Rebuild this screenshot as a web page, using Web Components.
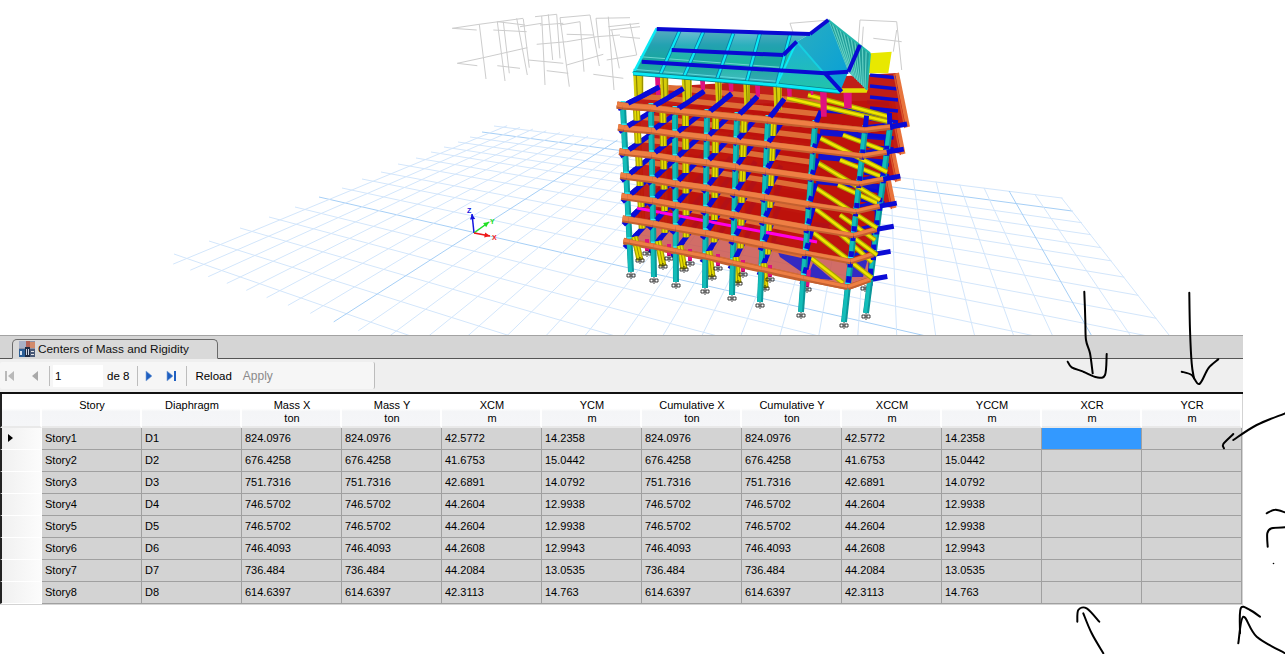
<!DOCTYPE html>
<html><head><meta charset="utf-8">
<style>
html,body{margin:0;padding:0;background:#fff}
body{width:1285px;height:654px;overflow:hidden;position:relative;font-family:"Liberation Sans",Arial,sans-serif}
</style></head>
<body>
<app-shell>
  <model-view></model-view>
  <results-panel>
    <tab-strip label="Centers of Mass and Rigidity"></tab-strip>
    <grid-toolbar></grid-toolbar>
    <data-grid></data-grid>
  </results-panel>
</app-shell>
<ink-layer></ink-layer>
<script>
class AppShell extends HTMLElement{constructor(){super();this.attachShadow({mode:'open'}).innerHTML=`<style>:host{display:flex;flex-direction:column;width:1285px;height:654px}</style><slot></slot>`}}
class ResultsPanel extends HTMLElement{constructor(){super();this.attachShadow({mode:'open'}).innerHTML=`<style>:host{display:flex;flex-direction:column;width:1243px;background:#d3d3d3;color:#000}</style><slot></slot>`}}

class TabStrip extends HTMLElement{constructor(){super();const l=this.getAttribute('label');this.attachShadow({mode:'open'}).innerHTML=`<style>
:host{display:flex;align-items:flex-end;height:24px;box-sizing:border-box;padding-left:12px;background:#d5d5d5;border-top:1px solid #a3a3a3;border-bottom:1px solid #555}
.tab{display:flex;align-items:center;gap:3px;box-sizing:border-box;width:206px;height:20px;margin-bottom:-1px;padding:0 0 0 6px;background:#d9d9d9;border:1px solid #6a6a6a;border-bottom:1px solid #d9d9d9;border-radius:5px 5px 0 0;font:11.8px "Liberation Sans",Arial,sans-serif;color:#111}
svg{flex:none;display:block}
</style><div class="tab"><svg width="16" height="16" viewBox="0 0 16 16"><rect width="16" height="16" fill="#8d93a6"/><rect x="0" y="0" width="7" height="7" fill="#a9b2c8"/><rect x="7" y="0" width="4" height="6" fill="#b5655a"/><rect x="11" y="1" width="5" height="6" fill="#d28b6b"/><rect x="0" y="8" width="6" height="8" fill="#2c5f96"/><rect x="1" y="10" width="2" height="4" fill="#d9e4f2"/><rect x="6" y="6" width="5" height="10" fill="#1f2c44"/><rect x="7" y="8" width="1" height="6" fill="#cfd6e4"/><rect x="9" y="8" width="1" height="6" fill="#cfd6e4"/><rect x="11" y="8" width="5" height="8" fill="#4a5a78"/><rect x="12" y="10" width="3" height="1" fill="#e6e6e6"/><rect x="12" y="13" width="3" height="1" fill="#e6e6e6"/></svg><span>${l}</span></div>`}}

class GridToolbar extends HTMLElement{constructor(){super();
const ic=(d,c)=>`<svg width="12" height="12" viewBox="0 0 12 12">${d.replace(/FILL/g,c)}</svg>`;
const first=`<rect x="1" y="1" width="2" height="10" fill="FILL"/><path d="M10 1v10L4 6z" fill="FILL"/>`;
const prev=`<path d="M9 1v10L3 6z" fill="FILL"/>`;
const next=`<path d="M3 1v10l6-5z" fill="FILL" stroke="#7fa6d8" stroke-width=".6"/>`;
const last=`<path d="M1 1v10l6-5z" fill="FILL" stroke="#7fa6d8" stroke-width=".6"/><rect x="8" y="1" width="2" height="10" fill="FILL"/>`;
this.attachShadow({mode:'open'}).innerHTML=`<style>
:host{display:block;height:35px;box-sizing:border-box;background:#efefef;border-bottom:2px solid #111;padding:3px 0 3px 0;font:11.5px "Liberation Sans",Arial,sans-serif}
.bar{display:flex;align-items:center;width:375px;height:27px;box-sizing:border-box;background:#f6f6f6;border-right:1px solid #bcbcbc;border-radius:2px;padding-left:4px}
svg{display:block;flex:none}
.sep{width:1px;height:20px;background:#bdbdbd;flex:none}
input{box-sizing:border-box;width:50px;height:22px;border:0;background:#fff;font:11.5px "Liberation Sans",Arial,sans-serif;padding:0 0 0 2px;margin:0;color:#000;outline:0}
.off{color:#8a8a8a;font-size:12px}
</style><div class="bar">
<span style="width:12px">${ic(first,'#b9b9b9')}</span><span style="width:13px"></span><span style="width:12px">${ic(prev,'#a9a9a9')}</span><span style="width:8px"></span>
<span class="sep"></span><span style="width:3px"></span><input value="1" aria-label="page"><span style="width:4px"></span><span>de 8</span><span style="width:8px"></span><span class="sep"></span><span style="width:5px"></span>
<span style="width:12px">${ic(next,'#1f5fc0')}</span><span style="width:11px"></span><span style="width:12px">${ic(last,'#1f5fc0')}</span><span style="width:8px"></span><span class="sep"></span><span style="width:8px"></span>
<span>Reload</span><span style="width:11px"></span><span class="off">Apply</span>
</div>`}}

class DataGrid extends HTMLElement{constructor(){super();
const heads=[['Story'],['Diaphragm'],['Mass X','ton'],['Mass Y','ton'],['XCM','m'],['YCM','m'],['Cumulative X','ton'],['Cumulative Y','ton'],['XCCM','m'],['YCCM','m'],['XCR','m'],['YCR','m']];
const d=[[824.0976,42.5772,14.2358],[676.4258,41.6753,15.0442],[751.7316,42.6891,14.0792],[746.5702,44.2604,12.9938],[746.5702,44.2604,12.9938],[746.4093,44.2608,12.9943],[736.484,44.2084,13.0535],[614.6397,42.3113,14.763]];
let h=`<div class="corner"></div>`+heads.map(x=>`<div class="h"><span>${x[0]}</span>${x[1]?`<span>${x[1]}</span>`:''}</div>`).join('');
d.forEach((r,i)=>{const cells=[`Story${i+1}`,`D${i+1}`,r[0],r[0],r[1],r[2],r[0],r[0],r[1],r[2],'',''];
h+=`<div class="rh">${i==0?'<i></i>':''}</div>`+cells.map((c,j)=>`<div class="c${i==0&&j==10?' sel':''}">${c}</div>`).join('')});
this.attachShadow({mode:'open'}).innerHTML=`<style>
:host{display:block;height:211px;background:#d3d3d3;font:11px "Liberation Sans",Arial,sans-serif;color:#000}
.g{display:grid;grid-template-columns:42px repeat(12,100px);grid-template-rows:34px repeat(8,22px);width:1242px}
.corner,.h{box-sizing:border-box;background:linear-gradient(#fff 0,#fff 45%,#f4f5f7 55%,#f5f6f8 100%);border-right:2px solid #fff;border-bottom:2px solid #e9e9e9}
.corner{border-left:2px solid #222}
.h{display:flex;flex-direction:column;align-items:center;padding:5px 0 0 2px;line-height:13px}
.rh{box-sizing:border-box;position:relative;border-left:2px solid #222;background:linear-gradient(90deg,#f0f0f0,#fcfcfc);border-bottom:1px solid #fff;border-right:1px solid #fff}
.rh i{position:absolute;left:6px;top:6px;width:0;height:0;border-left:5px solid #000;border-top:4px solid transparent;border-bottom:4px solid transparent}
.c{box-sizing:border-box;padding:0 0 0 3px;line-height:21px;background:#d3d3d3;border-right:1px solid #a0a0a0;border-bottom:1px solid #a0a0a0;white-space:nowrap;overflow:hidden}
.sel{background:#3399ff}
</style><div class="g">${h}</div>`}}

class ModelView extends HTMLElement{constructor(){super();
let s='';
const L=(a,b,c,d,col,w,op)=>{s+=`<line x1="${a.toFixed(1)}" y1="${b.toFixed(1)}" x2="${c.toFixed(1)}" y2="${d.toFixed(1)}" stroke="${col}" stroke-width="${w}"${op?` opacity="${op}"`:''}/>`};
const P=(pts,f,op)=>{s+=`<polygon points="${pts.map(p=>p[0].toFixed(1)+','+p[1].toFixed(1)).join(' ')}" fill="${f}"${op?` opacity="${op}"`:''}/>`};
const VA=[-594,-12],VB=[883,-30];
const aL=[[494,126],[482,132],[470,137],[458,142],[444,147],[431,152],[416,158],[398,164],[381,172],[362,179],[342,188],[319,197],[295,207],[269,217],[240,228],[209,241],[174,254]];
aL.forEach((p,i)=>{const m=(p[1]-VA[1])/(p[0]-VA[0]);
  const x=(p[1]-m*p[0]-214+1.283*1075)/(1.283-m);const y=p[1]+m*(x-p[0]);
  L(p[0],p[1],x,y,(i==1||i==11)?'#a6cff6':'#d3e6fb',1)});
for(let k=0;k<=30;k++){const x0=2+38.9*k;const sl=(x0-VB[0])/(335-VB[1]);
  const y=(126+.13*(VB[0]-sl*VB[1]-509))/(1-.13*sl);const x=VB[0]+sl*(y-VB[1]);
  const y2=(264+.36*(VB[0]-sl*VB[1]-173))/(1-.36*sl);const x2=VB[0]+sl*(y2-VB[1]);
  L(x,y,x2,y2,(k==8||k==28)?'#a6cff6':'#d3e6fb',1)}
const ar=(x1,y1,x2,y2,c)=>{L(x1,y1,x2,y2,c,1.5);const a=Math.atan2(y2-y1,x2-x1);const q=(t,r)=>[x2+r*Math.cos(a+t),y2+r*Math.sin(a+t)];P([[x2,y2],q(Math.PI-.45,6),q(Math.PI+.45,6)],c)};
ar(474,233,472,214,'#1414e0');ar(474,233,489,222,'#22e022');ar(474,233,490,236,'#f01818');
s+=`<g font-family="Liberation Sans,Arial,sans-serif" font-size="7" font-weight="700"><text x="467" y="213" fill="#1414e0">Z</text><text x="490" y="224" fill="#22e022">Y</text><text x="492" y="240" fill="#f01818">X</text></g>`;
const z6=[[118,58,138,222],[172,50,195,228],[190,50,208,205],[230,40,262,210],[250,42,268,188],[305,33,315,240],[325,28,338,165],[350,28,360,160],[360,38,388,245],[420,50,432,200],[450,30,478,183],[468,40,478,130],[505,35,522,255],[515,75,538,190],[570,55,590,150],
[37,70,118,58],[118,58,250,40],[37,70,110,75],[172,50,255,60],[160,75,260,80],[52,175,130,158],[130,158,262,128],[52,175,112,182],[172,182,240,190],[240,65,305,55],[285,35,350,28],[300,60,370,55],[360,38,450,30],[360,60,420,50],[290,118,380,110],[380,110,470,95],[265,165,370,175],[380,180,490,148],[320,197,385,205],[468,40,570,38],[505,65,598,55],[380,88,460,90],[540,95,600,100],[470,95,540,90],[460,208,550,220],[500,165,590,150],[510,75,600,65]];
z6.forEach(a=>L(440+a[0]/3,5+a[1]/3,440+a[2]/3,5+a[3]/3,'#cdcdcd',1));
const Zx=(x,y)=>[580+x/3,10+y/3];
const z3g=[[630,40,750,30],[630,40,640,70],[840,30,950,35],[840,30,835,100],[950,35,965,180],[965,95,880,85],[950,60,940,125],[850,50,845,120]];
z3g.forEach(a=>{const p=Zx(a[0],a[1]),q=Zx(a[2],a[3]);L(p[0],p[1],q[0],q[1],'#cdcdcd',1)});
const T=[[623,106],[651,108],[675,111],[707,114],[737,117],[768,120],[815,125],[865,130],[890,127]];
const F=[[631,272],[654,277],[676,282],[705,288],[732,295],[760,302],[801,312],[844,322],[866,313]];
const lev=[0,.135,.28,.425,.55,.685,.82];
const node=(i,k)=>[T[i][0]+(F[i][0]-T[i][0])*lev[k],T[i][1]+(F[i][1]-T[i][1])*lev[k]];
const dep=(p,f)=>[p[0]+(VB[0]-p[0])*f,p[1]+(VB[1]-p[1])*f];
const LP=(p,q,c,w,o)=>L(p[0],p[1],q[0],q[1],c,w,o);
const ye=[[[787,98,890,122],[808,95,890,117]],[[820,138,887,172],[843,135,883,150]],[[818,163,880,200],[840,160,880,176]],[[816,188,877,228],[838,185,877,203]],[[813,207,877,255],[840,215,875,240]],[[810,230,872,278],[830,225,872,262]],[[810,257,843,283]]];
const pin=(x,y)=>{s+=`<path d="M${x-4} ${y-1}h3v3h-3zM${x+1} ${y-1}h3v3h-3zM${x} ${y-3}v7" fill="none" stroke="#111" stroke-width=".8"/>`};
const col=(a,b)=>{LP(a,b,'#0a9699',6);L(a[0]-.8,a[1],b[0]-.8,b[1],'#12bdb9',3.6);};
const wall=(a,b)=>{LP(a,b,'#a8a000',7);LP(a,b,'#e6dc00',4.5);LP(a,b,'#9a9400',1)};
const beam=(p,q,w)=>{LP(p,q,'#c4602f',w);LP([p[0],p[1]-.8],[q[0],q[1]-.8],'#ee7f44',w-2.4)};
for(let k=6;k>=0;k--){
  const fr=[];for(let i=0;i<=8;i++)fr.push(node(i,k));
  const n0=node(0,k),n8=node(8,k);
  const back=k<=3?[[908-4.5*k,127+27*k],[897-4.5*k,73+27*k]]:[dep(n8,.2)];
  P([...fr,...back,dep(n0,.14)],k==6?'#c9534c':'#bd120c',k==6?.85:.95);
  if(k==6){[[[773,240],[807,253],[803,273],[780,257]],[[813,263],[833,280],[807,278]],[[843,250],[868,258],[863,277],[850,277]]].forEach(b=>P(b,'#2222cc',.9))}
  [.14,.07].forEach(f=>{for(let i=0;i<6;i++)LP(dep(fr[i],f),dep(fr[i+1],f),'#dd6c36',5.5);});
  if(k<6){LP(dep(fr[6],.1),dep(fr[8],.08),'#1212d0',6);LP(dep(fr[7],.02),dep(fr[8],.02),'#1212d0',3)}
  if(k<=3){for(let j=0;j<5;j++){const y=75+j*11+27*k,x=870-k*3;L(x,y,x+28-(k*1.5),y+3,'#0b0bd6',3.5)}
    L(908-4.5*k,127+27*k,897-4.5*k,73+27*k,'#e8743c',4);L(905-4.5*k,128+27*k,894-4.5*k,74+27*k,'#d8572a',1.5)}
  (ye[k]||[]).forEach(a=>{L(a[0],a[1],a[2],a[3],'#aba300',5);L(a[0],a[1],a[2],a[3],'#f0e600',2.6)});
  for(let i=0;i<=8;i++){const p=fr[i];LP(dep(p,-.02),dep(p,i>=6?.09:.14),'#0b0bd6',5)}
  if(k==5)L(637,208,817,242,'#ff00e6',3);
  if(k>0){
    for(let i=0;i<6;i++)wall(dep(node(i,k-1),.05),dep(node(i,k),.05));
    for(let i=0;i<=8;i++)col(node(i,k-1),node(i,k));
  }
  let prev=[n0[0]-6,n0[1]-1];for(let i=0;i<=8;i++){beam(prev,fr[i],i>=7?5.5:7);prev=fr[i]}
  LP(n8,[n8[0]+17,n8[1]-3],'#0b0bd6',5);
  for(let i=0;i<=8;i++){const p=fr[i];LP([p[0],p[1]-5],[p[0],p[1]-3.5],'#2ee9f2',5);LP(dep(p,.015),dep(p,.035),'#0b0bd6',5)}
  if(k==6){
    const inner=[[640,260],[647,253],[663,266],[669,258],[684,269],[690,263],[712,277],[718,268],[738,283],[743,274],[765,288],[770,279]];
    for(let i=0;i<6;i++){const a=dep(node(i,6),.02);const b=inner[i*2];wall(a,b);const c=inner[i*2+1];L(c[0],c[1]-14,c[0],c[1]-2,'#e0117f',4)}
    L(809,270,807,287,'#e0117f',4);
    inner.forEach(p=>pin(p[0],p[1]));pin(807,289);pin(865,288);
    for(let i=0;i<=8;i++){const a=node(i,6),b=F[i];col(a,b);pin(b[0],b[1]+3)}
    let pv=[n0[0]-6,n0[1]-1];for(let i=0;i<=8;i++){beam(pv,fr[i],5.5);pv=fr[i]}
  }
}
const Z=a=>a.map(p=>Zx(p[0],p[1]));
[[225,200,240,255],[360,210,375,240],[445,215,460,245],[525,225,540,260],[620,230,635,260],[690,235,700,255],[720,240,740,320],[790,240,815,295]].forEach(a=>{const p=Zx(a[0],a[1]),q=Zx(a[2],a[3]);P([p,[q[0],p[1]],q,[p[0]+1,q[1]]],'#e0117f')});
[[160,195,190,260],[240,200,265,268],[305,205,335,275],[405,215,425,285],[490,220,510,290],[580,230,605,300]].forEach(a=>{const p=Zx(a[0],a[1]),q=Zx(a[2],a[3]);P([p,[q[0],p[1]],q,[p[0]+1,q[1]]],'#d6cd0a');L(p[0]+3,p[1],p[0]+4,q[1],'#8b8500',1.2);L(q[0]-1,p[1],q[0]-1,q[1],'#8b8500',1)});
{let prev=[617,105];for(let i=0;i<=8;i++){const n=node(i,0);beam(prev,n,i>=7?5.5:7);prev=n}
 for(let i=0;i<6;i++){const n=node(i,0);LP(dep(n,.02),dep(n,.14),'#0b0bd6',5);}
}
P(Z([[870,130],[935,125],[925,190],[860,190]]),'#e8e800');
P(Z([[770,235],[865,235],[860,248],[780,248]]),'#e2dc00');
s+=`<defs><linearGradient id="g1" x1="0" y1="0" x2="0" y2="1"><stop offset="0" stop-color="#78bdd6"/><stop offset=".3" stop-color="#2bb0bc"/><stop offset=".6" stop-color="#1cb8a0"/><stop offset="1" stop-color="#4ab9c6"/></linearGradient><linearGradient id="g2" x1="0" y1="0" x2="1" y2="1"><stop offset="0" stop-color="#2aaec0"/><stop offset="1" stop-color="#069fd8"/></linearGradient><linearGradient id="g3" x1="0" y1="0" x2="0" y2="1"><stop offset="0" stop-color="#1db1d8"/><stop offset="1" stop-color="#22c4a8"/></linearGradient></defs>`;
P(Z([[745,30],[870,130],[860,240],[805,185]]),'#1f9d98');
for(let j=0;j<11;j++){const f=j/11;const a=Zx(745+125*f,30+100*f),b=Zx(805+55*f,185+55*f);LP(a,b,'#63d0c4',1.2)}
P(Z([[230,55],[690,72],[650,95],[590,225],[160,190]]),'url(#g1)');
P(Z([[690,72],[745,30],[805,185],[780,245],[650,95]]),'url(#g2)');
P(Z([[650,95],[780,245],[590,225]]),'url(#g3)');
const ZL=(x1,y1,x2,y2,c,w)=>{const p=Zx(x1,y1),q=Zx(x2,y2);LP(p,q,c,w)};
[[230,55,300,60,240,195,160,190],[370,65,460,70,410,210,310,205],[540,70,630,75,590,225,500,215]].forEach(a=>P(Z([[a[0],a[1]],[a[2],a[3]],[a[4],a[5]],[a[6],a[7]]]),'#0e7f92',.28));
ZL(160,178,590,214,'#5fd8dc',1);ZL(180,140,600,172,'#6ad6d0',1);
[[300,60,240,195],[370,65,310,205],[460,70,410,210],[540,70,500,215],[630,75,590,225]].forEach(a=>{ZL(a[0],a[1],a[2],a[3],'#0a7fa8',4);ZL(a[0],a[1],a[2],a[3],'#0beaf5',2.2)});
ZL(230,55,160,190,'#0beaf5',2.5);
ZL(160,190,590,225,'#08808f',4.5);ZL(590,225,780,245,'#08808f',4.5);
ZL(160,190,590,225,'#0beaf5',2.8);ZL(590,225,780,245,'#0beaf5',2.8);
ZL(650,95,590,225,'#0beaf5',2);ZL(650,95,780,245,'#16cfe0',2);
ZL(745,30,870,130,'#23b8ad',2);ZL(870,130,860,240,'#23b8ad',2);
ZL(230,57,690,72,'#0909d2',4);ZL(690,72,745,30,'#0909d2',4);
ZL(275,120,610,135,'#0909d2',4);ZL(610,135,650,95,'#0909d2',4);
ZL(185,155,735,190,'#0909d2',4);ZL(735,190,805,185,'#0909d2',4);
ZL(840,105,805,185,'#0909d2',4);ZL(735,190,785,245,'#0909d2',4);
this.attachShadow({mode:'open'}).innerHTML=`<style>:host{display:block;width:1285px;height:335px;overflow:hidden;background:#fff}svg{display:block}</style><svg width="1285" height="335" viewBox="0 0 1285 335">${s}</svg>`}}

class InkLayer extends HTMLElement{constructor(){super();
const toP=p=>[1000+p[0]/3,280+p[1]/3];
const curve=a=>{const q=a.map(toP);let d=`M${q[0][0].toFixed(1)} ${q[0][1].toFixed(1)}`;
 for(let i=0;i<q.length-1;i++){const p0=q[i-1]||q[i],p1=q[i],p2=q[i+1],p3=q[i+2]||p2;
  const c1=[p1[0]+(p2[0]-p0[0])/6,p1[1]+(p2[1]-p0[1])/6],c2=[p2[0]-(p3[0]-p1[0])/6,p2[1]-(p3[1]-p1[1])/6];
  d+=`C${c1[0].toFixed(1)} ${c1[1].toFixed(1)} ${c2[0].toFixed(1)} ${c2[1].toFixed(1)} ${p2[0].toFixed(1)} ${p2[1].toFixed(1)}`}
 return d};
const lines=[
[[253,35],[256,120],[258,180],[270,220],[278,280]],
[[203,245],[215,262],[250,275],[290,292],[315,285],[320,222]],
[[568,38],[570,150],[575,250],[582,295]],
[[545,275],[575,285],[598,312],[625,265],[655,238]],
[[855,400],[770,435],[700,480]],
[[700,462],[670,492],[672,505]],
[[803,800],[802,760],[815,745],[855,742]],
[[800,700],[825,689],[855,697]],
[[310,1120],[275,1060],[250,1000]],
[[232,1025],[235,990],[260,985],[298,1025]],
[[855,1120],[770,1070],[730,1010],[715,1090]],
[[720,1060],[722,985],[750,990],[780,1010]]];
this.attachShadow({mode:'open'}).innerHTML=`<style>:host{position:absolute;left:0;top:0;width:1285px;height:654px;pointer-events:none}svg{display:block}path{fill:none;stroke:#000;stroke-width:2;stroke-linecap:round;stroke-linejoin:round}</style><svg width="1285" height="654">${lines.map(l=>`<path d="${curve(l)}"/>`).join('')}<circle cx="1273.5" cy="563.5" r=".8" fill="#000"/></svg>`}}

customElements.define('app-shell',AppShell);
customElements.define('results-panel',ResultsPanel);
customElements.define('tab-strip',TabStrip);
customElements.define('grid-toolbar',GridToolbar);
customElements.define('data-grid',DataGrid);
customElements.define('model-view',ModelView);
customElements.define('ink-layer',InkLayer);
</script>
</body></html>
